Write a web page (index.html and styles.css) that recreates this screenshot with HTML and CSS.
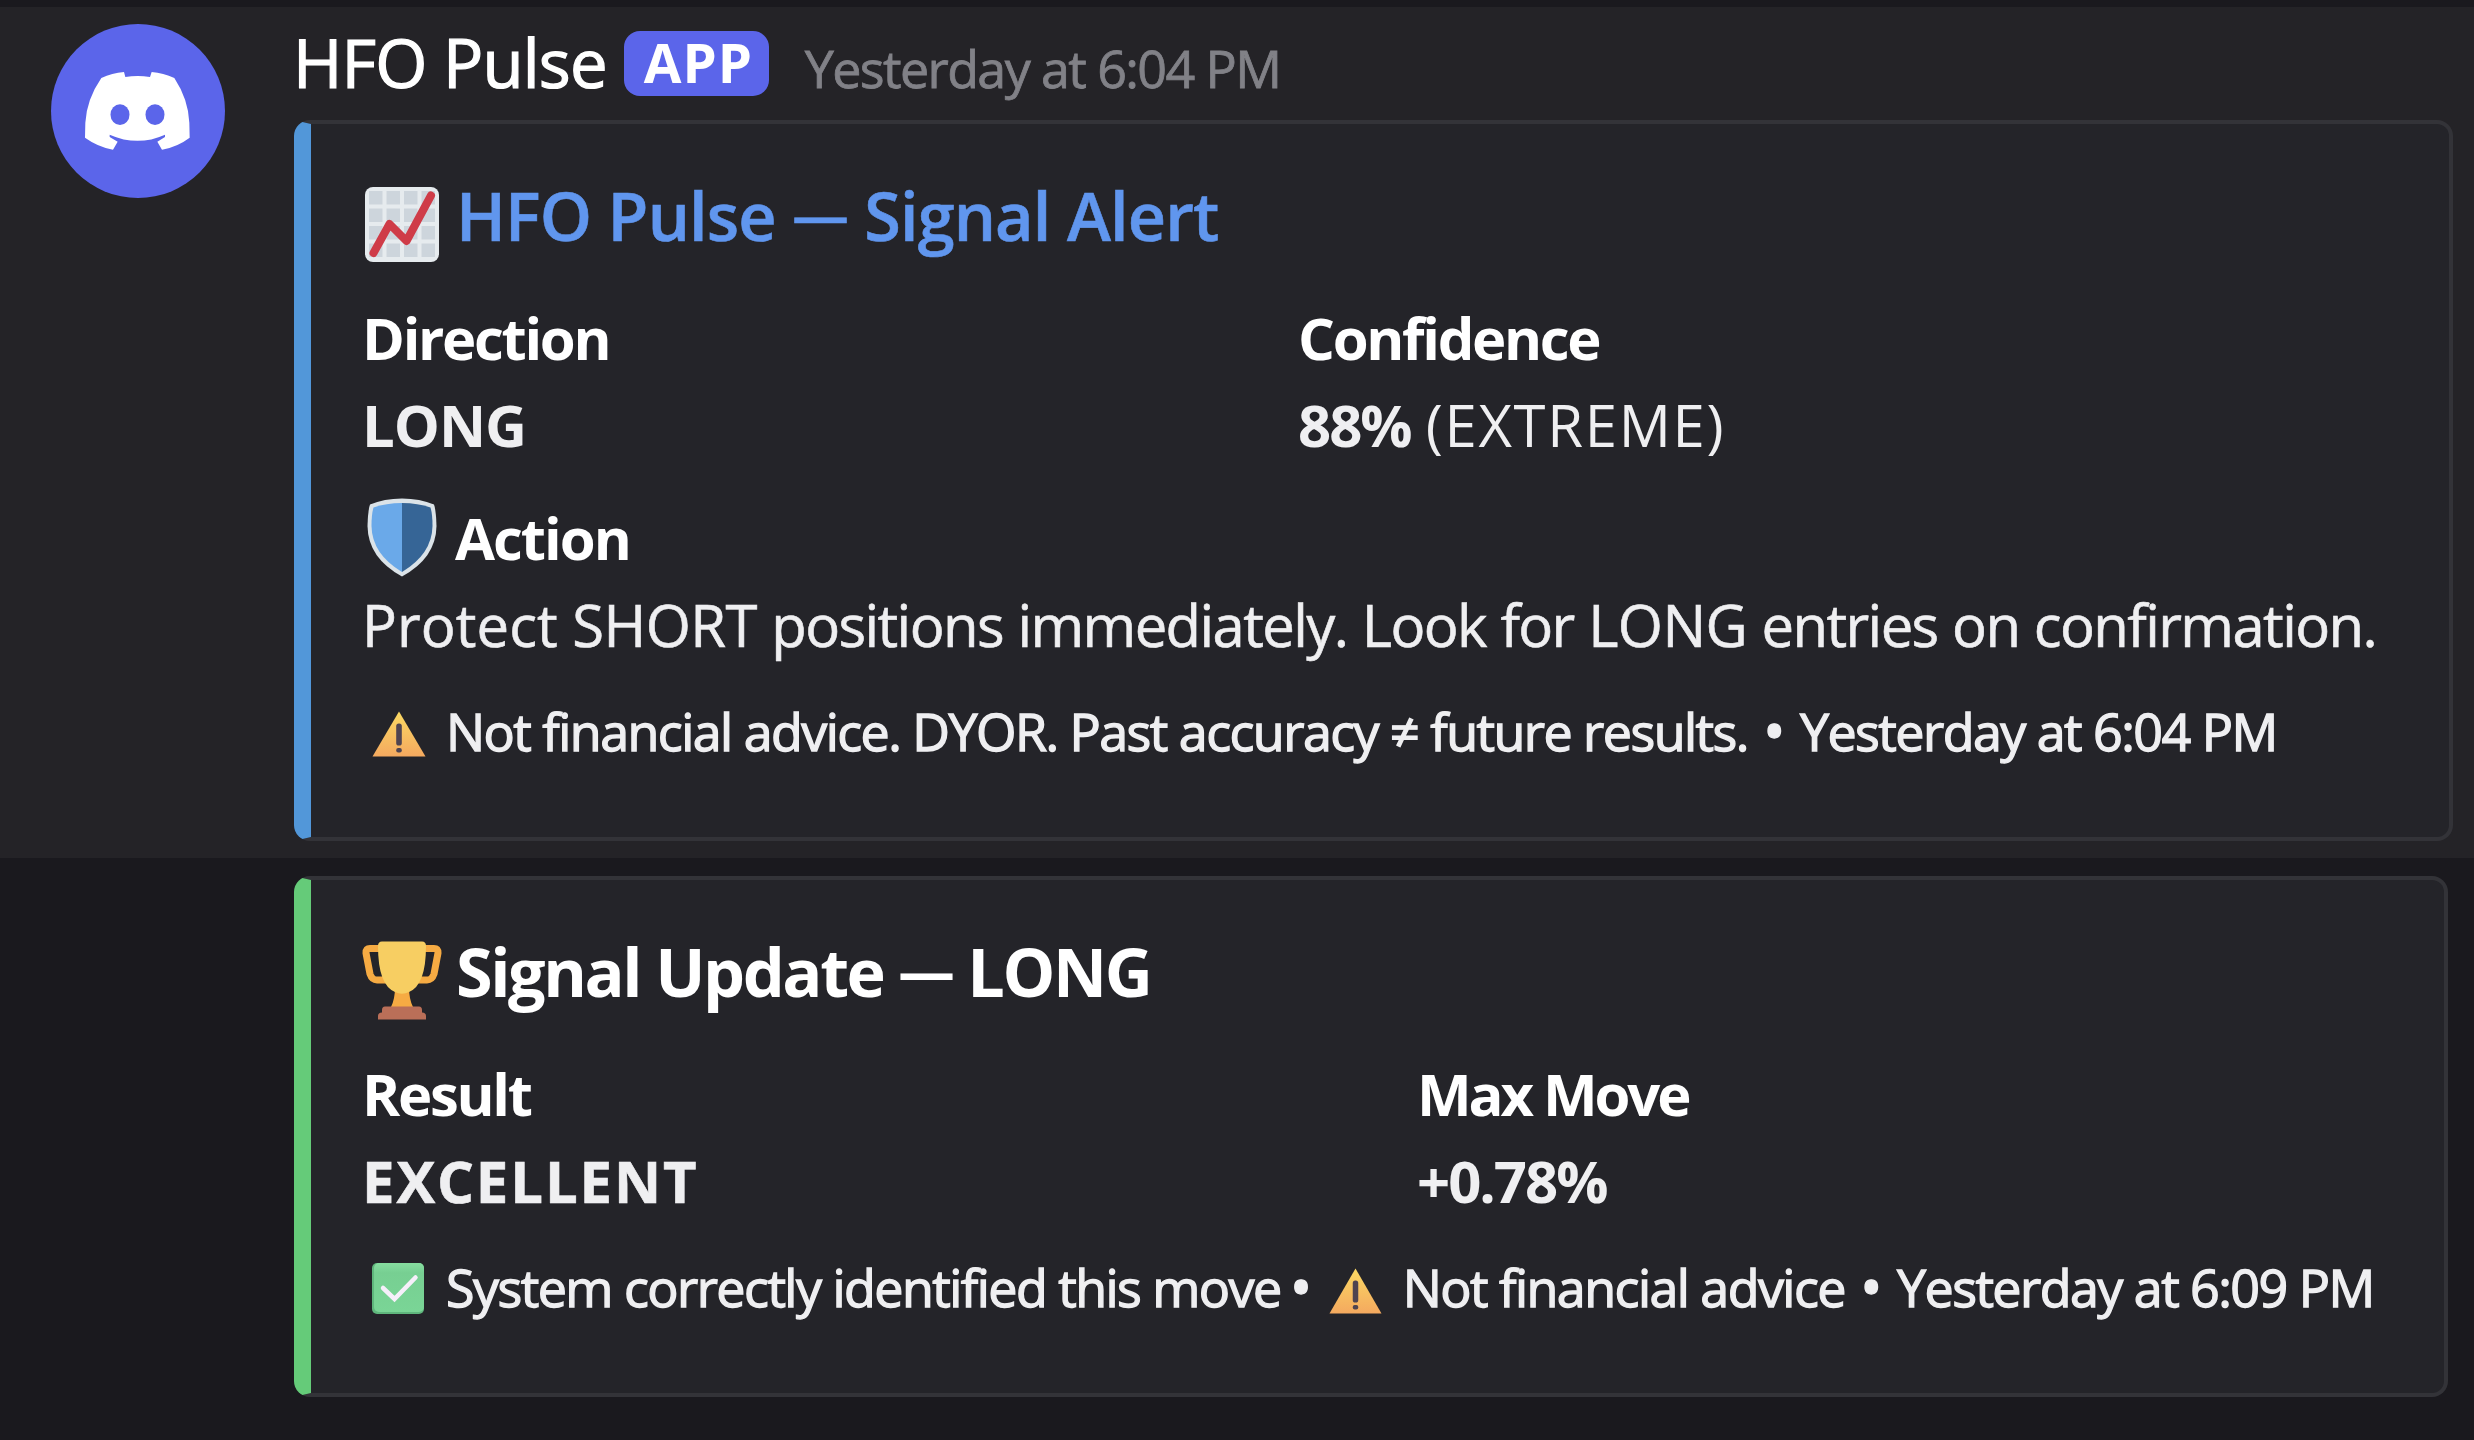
FILE: index.html
```
<!DOCTYPE html>
<html lang="en">
<head>
  <meta charset="UTF-8">
  <title>HFO Pulse</title>
  <link rel="stylesheet" href="styles.css">
</head>
<body>
  <!-- shared icon used in both footers -->
  <svg class="defs" width="0" height="0">
    <linearGradient id="warn" x1="0" y1="0" x2="0" y2="1">
      <stop offset="0" stop-color="#fbd963"/>
      <stop offset="1" stop-color="#f4a95f"/>
    </linearGradient>
    <linearGradient id="check" x1="0" y1="0" x2="0" y2="1">
      <stop offset="0" stop-color="#87dea0"/>
      <stop offset=".2" stop-color="#77cf92"/>
      <stop offset="1" stop-color="#7ad596"/>
    </linearGradient>
    <symbol id="warning" viewBox="0 0 54 46" preserveAspectRatio="none">
      <path d="M27 0.5 L53.5 45.5 H0.5 Z" fill="url(#warn)"/>
      <rect x="24.2" y="12.5" width="5.6" height="22" rx="2.6" fill="#4f4450"/>
      <rect x="24.2" y="37" width="5.6" height="4.6" rx="2" fill="#4f4450"/>
    </symbol>
  </svg>

  <div class="message">
    <div class="avatar">
      <svg width="105" height="78" viewBox="45 38 315 234">
        <path fill="#fff" d="M162 38 L166 53 Q203 47 240 53 L245 38 Q280 41 313 56 Q355 120 358 190 L359 235 Q322 263 276 271 L262 247 L285 233 L285 226 Q203 263 119 226 L119 233 L143 247 L129 271 Q84 263 45 235 L46 190 Q50 120 94 56 Q126 41 162 38 Z"/>
        <ellipse cx="150" cy="166" rx="28.5" ry="31" fill="#5b65ea"/>
        <ellipse cx="255" cy="166" rx="28.5" ry="31" fill="#5b65ea"/>
      </svg>
    </div>

    <div class="content">
      <div class="header">
        <span class="name">HFO Pulse</span>
        <span class="badge">APP</span>
        <span class="time">Yesterday at 6:04 PM</span>
      </div>

      <div class="embed blue">
        <div class="title link">
          <svg class="icon-chart" width="74" height="75" viewBox="0 0 74 75">
            <rect width="74" height="75" rx="8" fill="#e6ebee"/>
            <g fill="#cdd5dc">
              <path d="M4 4h13.500v13.500h-13.500zM21.500 4h13.500v13.500h-13.500zM39 4h13.500v13.500h-13.500zM56.500 4h13.500v13.500h-13.500z"/>
              <path d="M4 21.500h13.500v13.500h-13.500zM21.500 21.500h13.500v13.500h-13.500zM39 21.500h13.500v13.500h-13.500zM56.500 21.500h13.500v13.500h-13.500z"/>
              <path d="M4 39h13.500v13.500h-13.500zM21.500 39h13.500v13.500h-13.500zM39 39h13.500v13.500h-13.500zM56.500 39h13.500v13.500h-13.500z"/>
              <path d="M4 56.500h13.500v13.500h-13.500zM21.500 56.500h13.500v13.500h-13.500zM39 56.500h13.500v13.500h-13.500zM56.500 56.500h13.500v13.500h-13.500z"/>
            </g>
            <path d="M8.500 66 L24.500 37 L41.500 54 L66 8.500" fill="none" stroke="#cf3c48" stroke-width="8" stroke-linecap="round" stroke-linejoin="round"/>
          </svg>
          <span>HFO Pulse <span class="dash">—</span> Signal Alert</span>
        </div>

        <div class="fields">
          <div class="field">
            <div class="field-name">Direction</div>
            <div class="field-value"><b class="long">LONG</b></div>
          </div>
          <div class="field">
            <div class="field-name">Confidence</div>
            <div class="field-value"><b>88%</b> <span class="level">(EXTREME)</span></div>
          </div>
        </div>

        <div class="field action">
          <div class="field-name with-icon">
            <svg class="icon-shield" width="70" height="79" viewBox="0 0 70 79">
              <path d="M35 0.500 Q53 0.500 67 6.500 Q69 12 69.500 28 Q69 60 35 78.500 Q1 60 0.500 28 Q1 12 3 6.500 Q17 0.500 35 0.500 Z" fill="#dbe3e8"/>
              <path d="M35 5 Q19 5 6.500 9.500 Q4.500 16 4.500 28 Q5 56 35 74 Z" fill="#6aa9e9"/>
              <path d="M35 5 Q51 5 63.500 9.500 Q65.500 16 65.500 28 Q65 56 35 74 Z" fill="#366596"/>
            </svg>
            <span>Action</span>
          </div>
          <div class="field-value body"><span class="lead">Protect</span> <span class="caps">SHORT</span> positions immediately. Look for <span class="caps">LONG</span> entries on confirmation.</div>
        </div>

        <div class="footer">
          <svg class="icon-warning" width="54" height="46"><use href="#warning"/></svg>
          <span>Not financial advice. DYOR. Past accuracy ≠ future results.</span>
          <span class="dot">•</span>
          <span>Yesterday at 6:04 PM</span>
        </div>
      </div>
    </div>
  </div>

  <div class="message grouped">
    <div class="content">
      <div class="embed green">
        <div class="title">
          <svg class="icon-trophy" width="80" height="79" viewBox="0 0 80 79">
            <g fill="none" stroke="#f6ab43" stroke-width="7" stroke-linejoin="round">
              <path d="M24 7.500 H8 Q4 7.500 4 12 L8 33 Q10 39 15 39 H28"/>
              <path d="M56 7.500 H72 Q76 7.500 76 12 L72 33 Q70 39 65 39 H52"/>
            </g>
            <path d="M33 46 H47 Q47 58 51 66 H29 Q33 58 33 46 Z" fill="#f6ab43"/>
            <path d="M20 0.500 H60 Q64 0.500 64 5 Q64 44 47 51 Q40 54.500 33 51 Q16 44 16 5 Q16 0.500 20 0.500 Z" fill="#f7ce62"/>
            <path d="M23 65.500 H57 Q60 65.500 60 69 V71.500 Q64 71.500 64 75 V78.500 H16 V75 Q16 71.500 20 71.500 V69 Q20 65.500 23 65.500 Z" fill="#ba6f58"/>
          </svg>
          <span>Signal Update <span class="dash">—</span> LONG</span>
        </div>

        <div class="fields">
          <div class="field">
            <div class="field-name">Result</div>
            <div class="field-value"><b class="wide">EXCELLENT</b></div>
          </div>
          <div class="field">
            <div class="field-name">Max Move</div>
            <div class="field-value"><b>+0.78%</b></div>
          </div>
        </div>

        <div class="footer">
          <svg class="icon-check" width="52" height="51" viewBox="0 0 52 51">
            <rect width="52" height="51" rx="5" fill="#5fb67c"/>
            <rect x="2" width="50" height="49" rx="5" fill="url(#check)"/>
            <path d="M11 25 L22.500 36 L43.500 14.500" fill="none" stroke="#f6effa" stroke-width="4.500" stroke-linecap="round"/>
          </svg>
          <span>System correctly identified this move</span>
          <span class="dot tight">•</span>
          <svg class="icon-warning" width="53" height="46"><use href="#warning"/></svg>
          <span>Not financial advice</span>
          <span class="dot">•</span>
          <span>Yesterday at 6:09 PM</span>
        </div>
      </div>
    </div>
  </div>
</body>
</html>
```
FILE: styles.css
```
* {
  box-sizing: border-box;
}

body {
  margin: 0;
  padding-top: 7px;
  min-height: 1440px;
  background: #1a191e;
  color: #efeff1;
  font-family: "Open Sans", "Noto Sans", sans-serif;
  white-space: nowrap;
  overflow: hidden;
}

.defs {
  position: absolute;
}

.message {
  display: flex;
  height: 851px;
  padding: 17px 21px 17px 51px;
  background: #242327;
}

.message.grouped {
  height: auto;
  padding: 18px 26px 0 294px;
  background: none;
}

.avatar {
  display: flex;
  flex: none;
  align-items: center;
  justify-content: center;
  width: 174px;
  height: 174px;
  margin-right: 69px;
  padding-right: 2px;
  border-radius: 50%;
  background: #5b65ea;
}

.content {
  flex: 1;
}

/* header */

.header {
  display: flex;
  align-items: flex-start;
  height: 96px;
}

.name {
  margin: -2px 0 0 -1px;
  color: #fff;
  font-size: 67px;
  font-weight: 500;
  line-height: 80px;
  letter-spacing: -0.85px;
  -webkit-text-stroke: 1.2px;
}

.badge {
  width: 145px;
  height: 65px;
  margin: 7px 36px 0 17px;
  padding-left: 20px;
  border-radius: 16px;
  background: #5b65ea;
  color: #fff;
  font-size: 54.6px;
  font-weight: 700;
  line-height: 63px;
  letter-spacing: 1px;
}

.time {
  margin-top: 4px;
  color: #818187;
  font-size: 52px;
  font-weight: 500;
  line-height: 80px;
  letter-spacing: -1.6px;
  -webkit-text-stroke: 0.8px;
}

/* embeds */

.embed {
  padding: 50px 0 77px 51px;
  border: 4px solid #333338;
  border-left-width: 17px;
  border-radius: 16px;
  background: #242429;
}

.embed.blue {
  height: 721px;
  border-left-color: #5297d9;
}

.embed.green {
  height: 521px;
  border-left-color: #65cb79;
}

.title {
  display: flex;
  align-items: flex-start;
  height: 80px;
  color: #fff;
  font-size: 66.5px;
  font-weight: 700;
  line-height: 82px;
  letter-spacing: -2.4px;
}

.title.link {
  color: #6096ee;
  font-weight: 600;
  letter-spacing: -0.85px;
  -webkit-text-stroke: 0.6px;
}

.dash {
  font-size: 0.85em;
  line-height: 0;
  vertical-align: 5px;
}

.icon-chart {
  margin: 13px 17px 0 3px;
}

.icon-trophy {
  margin: 11px 14px 0 0;
}

.fields {
  display: grid;
  grid-template-columns: 936px 1fr;
  margin-top: 40px;
}

.green .fields {
  grid-template-columns: 1055px 1fr;
}

.field {
  font-size: 58px;
  line-height: 87px;
}

.field-name {
  color: #fff;
  font-weight: 700;
  letter-spacing: -2.3px;
}

.field-name.with-icon {
  display: flex;
  height: 87px;
  letter-spacing: -2px;
}

.green .field + .field .field-name {
  letter-spacing: -3.1px;
}

.field-value b {
  letter-spacing: -2px;
}

.field-value .long {
  letter-spacing: -1px;
}

.field-value .wide {
  letter-spacing: 1.9px;
  -webkit-text-stroke: 0.6px;
}

.level {
  letter-spacing: 1.7px;
}

.action {
  margin-top: 26px;
}

.icon-shield {
  margin: 4px 18px 0 5px;
}

.body {
  letter-spacing: -1.6px;
  word-spacing: 1px;
  -webkit-text-stroke: 0.6px;
}

.lead {
  letter-spacing: 0.1px;
}

.caps {
  letter-spacing: -0.6px;
}

.footer {
  display: flex;
  height: 60px;
  margin-top: 32px;
  font-size: 52px;
  font-weight: 500;
  line-height: 62px;
  letter-spacing: -1.55px;
  -webkit-text-stroke: 1.3px;
}

.icon-warning {
  margin: 11px 20px 0 10px;
}

.icon-check {
  margin: 7px 22px 0 10px;
}

.dot {
  margin: 0 16px 0 15px;
  font-size: 60px;
  line-height: 60px;
}

.dot.tight {
  margin: 0 12px 0 9px;
}

.green .icon-warning {
  margin: 12px 21px 0 6px;
}
```
